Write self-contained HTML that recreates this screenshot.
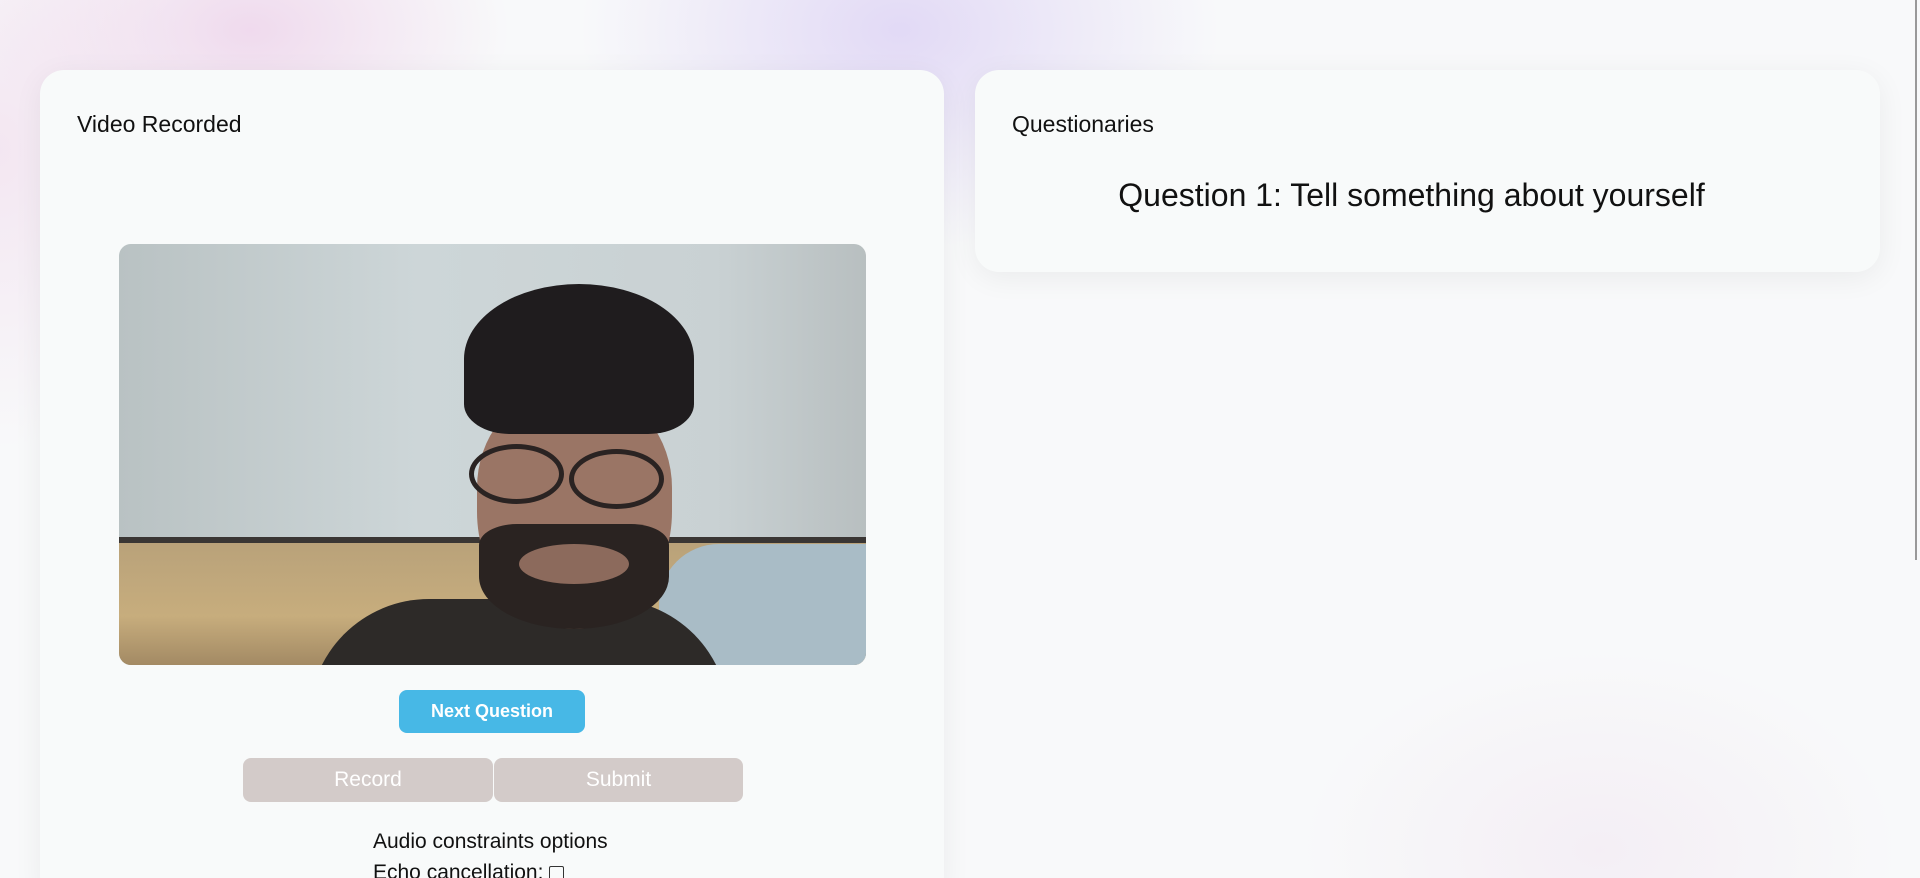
<!DOCTYPE html>
<html><head><meta charset="utf-8"><style>
*{margin:0;padding:0;box-sizing:border-box}
html,body{width:1920px;height:878px;overflow:hidden}
body{background:#f8f9fa;font-family:"Liberation Sans",sans-serif;position:relative;color:#111}
.bg{position:absolute;inset:0;background:
radial-gradient(ellipse 260px 160px at 250px 30px,rgba(236,205,232,.7),transparent),
radial-gradient(ellipse 320px 220px at 900px 30px,rgba(222,212,245,.85),transparent),
radial-gradient(ellipse 200px 300px at 0px 150px,rgba(240,218,236,.6),transparent),
radial-gradient(ellipse 300px 200px at 1600px 850px,rgba(240,228,240,.5),transparent)}
.card{position:absolute;background:#f8fafa;border-radius:24px;box-shadow:0 6px 30px rgba(0,0,0,.06)}
.t{position:absolute;font-size:23px}
.vid{position:absolute;left:119px;top:244px;width:747px;height:421px;border-radius:12px;overflow:hidden;background:linear-gradient(90deg,#b9c2c3,#cdd6d8 40%,#c9d1d3 80%,#b8bfc0)}
.vid div{position:absolute}
.btn{position:absolute;color:#fff;text-align:center;border-radius:8px}
</style></head><body>
<div class="bg"></div>
<div class="card" style="left:40px;top:70px;width:904px;height:830px"></div>
<div class="card" style="left:975px;top:70px;width:905px;height:202px"></div>
<div class="t" style="left:77px;top:111px">Video Recorded</div>
<div class="t" style="left:1012px;top:111px">Questionaries</div>
<div style="position:absolute;left:959px;width:905px;top:177px;text-align:center;font-size:32px">Question 1: Tell something about yourself</div>
<div class="vid">
<div style="left:0;top:293px;width:747px;height:6px;background:#3a3634"></div>
<div style="left:0;top:299px;width:747px;height:122px;background:linear-gradient(180deg,#b9a27a,#c7ad7d 60%,#a38a64)"></div>
<div style="left:540px;top:300px;width:207px;height:121px;background:#a9bcc6;border-radius:60px 0 0 0"></div>
<div style="left:190px;top:355px;width:420px;height:120px;background:#2d2a28;border-radius:200px 200px 0 0"></div>
<div style="left:358px;top:150px;width:195px;height:235px;background:#9a7565;border-radius:40% 40% 50% 50%"></div>
<div style="left:360px;top:280px;width:190px;height:105px;background:#2a2321;border-radius:20% 20% 50% 50%"></div>
<div style="left:400px;top:300px;width:110px;height:40px;background:#8c6a5c;border-radius:50%"></div>
<div style="left:345px;top:40px;width:230px;height:150px;background:#1f1c1e;border-radius:50% 50% 20% 20%"></div>
<div style="left:350px;top:200px;width:95px;height:60px;border:5px solid #2a2322;border-radius:50%"></div>
<div style="left:450px;top:205px;width:95px;height:60px;border:5px solid #2a2322;border-radius:50%"></div>
</div>
<div class="btn" style="left:399px;top:690px;width:186px;height:43px;background:#47b8e6;font-weight:bold;font-size:18px;line-height:43px">Next Question</div>
<div class="btn" style="left:243px;top:758px;width:250px;height:44px;background:#d3cbc9;font-size:21px;line-height:44px">Record</div>
<div class="btn" style="left:494px;top:758px;width:249px;height:44px;background:#d3cbc9;font-size:21px;line-height:44px">Submit</div>
<div style="position:absolute;left:373px;top:830px;font-size:21px">Audio constraints options</div>
<div style="position:absolute;left:373px;top:861px;font-size:21px;white-space:nowrap">Echo cancellation: <span style="display:inline-block;width:15px;height:15px;border:1.5px solid #333;border-radius:2px;vertical-align:-2px"></span></div>
<div style="position:absolute;left:1915px;top:0;width:2px;height:560px;background:#999"></div>
</body></html>
